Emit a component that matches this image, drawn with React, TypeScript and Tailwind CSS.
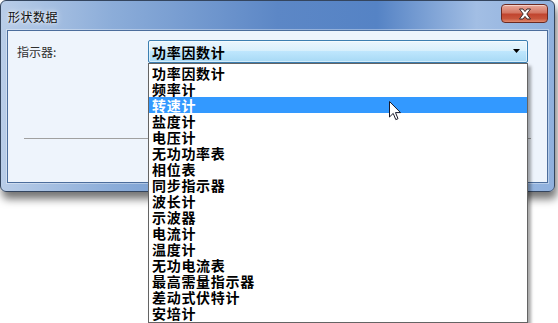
import React from 'react';

const items = [
  '功率因数计',
  '频率计',
  '转速计',
  '盐度计',
  '电压计',
  '无功功率表',
  '相位表',
  '同步指示器',
  '波长计',
  '示波器',
  '电流计',
  '温度计',
  '无功电流表',
  '最高需量指示器',
  '差动式伏特计',
  '安培计',
];

const SELECTED = 2;

function CloseButton() {
  return (
    <div className="mt-[3px] mr-[6px] flex h-[19px] w-[47px] items-center justify-center rounded-[4px] border border-[#6b2a22] bg-[linear-gradient(to_bottom,#e9a99b_0%,#d47764_45%,#c1452f_55%,#c8553c_80%,#e08a6f_100%)] shadow-[inset_0_1px_0_rgba(255,255,255,0.5)]">
      <svg width="14" height="12" viewBox="0 0 14 12">
        <path
          d="M1.5 1 H5 L7 3.6 L9 1 H12.5 L8.8 6 L12.5 11 H9 L7 8.4 L5 11 H1.5 L5.2 6 Z"
          fill="#ffffff"
          stroke="#3b2a2a"
          strokeWidth="1"
          strokeLinejoin="round"
        />
      </svg>
    </div>
  );
}

function Cursor() {
  return (
    <svg
      className="absolute left-[389px] top-[101px]"
      width="13"
      height="20"
      viewBox="0 0 13 20"
    >
      <path
        d="M0.5 0.5 L0.5 16 L4.2 12.4 L6.8 18.6 L9 17.7 L6.5 11.6 L11.5 11.6 Z"
        fill="#ffffff"
        stroke="#1a1a2a"
        strokeWidth="1"
        strokeLinejoin="miter"
      />
    </svg>
  );
}

export default function App() {
  return (
    <div className="relative h-[323px] w-[558px] overflow-hidden bg-white">
      {/* Dialog window */}
      <div className="flex h-[192px] w-[555px] flex-col rounded-[6px] border border-[#34455e] bg-[linear-gradient(to_right,#b9cde8_0%,#8cadd9_20%,#5c87c6_50%,#5583c5_68%,#a2bee4_86%,#8fb0dd_100%)] shadow-[2px_7px_9px_rgba(0,0,0,0.55)]">
        {/* Title bar */}
        <div className="flex h-[29px] items-start justify-between">
          <span className="ml-[7px] mt-[8px] text-[12px] leading-[16px] tracking-[0.5px] text-[#101010] [text-shadow:0_0_6px_rgba(255,255,255,0.9),0_0_3px_rgba(255,255,255,0.8)] font-['Microsoft_YaHei','Noto_Sans_CJK_SC',sans-serif]">
            形状数据
          </span>
          <CloseButton />
        </div>

        {/* Client area */}
        <div className="mx-[6px] mb-[8px] flex-1 border border-[#4c6d9c] bg-[#eef4fc] shadow-[0_0_0_1px_rgba(255,255,255,0.35)]">
          <div className="mt-[9px] flex h-[23px] items-center">
            <span className="ml-[9px] w-[131px] text-[12px] text-[#303030] font-['Microsoft_YaHei','Noto_Sans_CJK_SC',sans-serif]">
              指示器:
            </span>
            <div className="flex h-[23px] w-[380px] items-center justify-between rounded-[2px] border border-[#3c7fb1] bg-[linear-gradient(to_bottom,#eaf6fd_0%,#d9f0fc_45%,#bee6fd_50%,#a7d9f5_100%)] pl-[3px] pr-[6px] shadow-[inset_0_0_0_1px_rgba(255,255,255,0.5)]">
              <span className="text-[14px] font-bold leading-4 tracking-[0.7px] text-black font-['Noto_Sans_CJK_SC',sans-serif]">
                功率因数计
              </span>
              <svg width="8" height="5" viewBox="0 0 8 5">
                <path d="M0 0 H7 L3.5 4 Z" fill="#000000" />
              </svg>
            </div>
          </div>
          <div className="mx-[16px] mt-[75px] h-px bg-[#a0a0a0]" />
        </div>
      </div>

      {/* Dropdown list */}
      <div className="absolute left-[148px] top-[63px] w-[380px] border border-[#646464] bg-white py-px shadow-[3px_3px_3px_rgba(0,0,0,0.35)]">
        {items.map((item, i) => (
          <div
            key={item}
            className={`h-4 pl-[3px] text-[14px] font-bold leading-4 tracking-[0.7px] font-['Noto_Sans_CJK_SC',sans-serif] ${
              i === SELECTED ? 'bg-[#3399ff] text-white' : 'text-black'
            }`}
          >
            {item}
          </div>
        ))}
      </div>

      <Cursor />
    </div>
  );
}
